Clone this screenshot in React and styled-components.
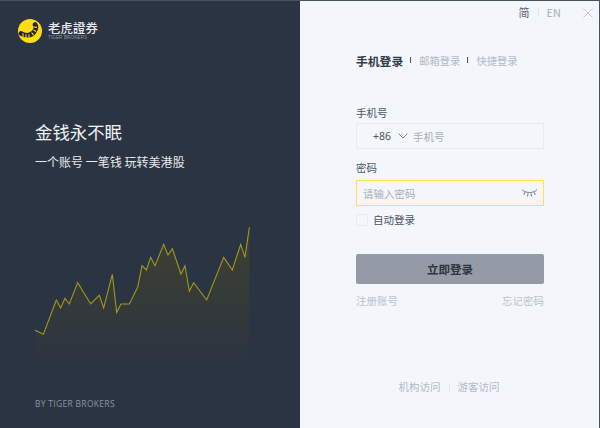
import React from "react";
import styled, { createGlobalStyle } from "styled-components";

const Global = createGlobalStyle`
  html, body { margin: 0; padding: 0; background: #2a3442; }
  * { box-sizing: border-box; }
  body { font-family: "Noto Sans CJK SC", "Liberation Sans", sans-serif; }
`;
const Win = styled.div`
  width: 600px; height: 428px; display: flex; overflow: hidden;
  border-top: 1px solid #4a525e; border-right: 1px solid #4a525e;
`;
const Left = styled.aside`
  width: 300px; height: 100%; background: #2a3442; color: #fff;
  display: flex; flex-direction: column; padding: 15px 0 0 18px;
`;
const Brand = styled.div`
  display: flex; align-items: center; gap: 6px; height: 30px;
`;
const BrandText = styled.div`
  display: flex; flex-direction: column; color: #e8eaed;
`;
const BrandName = styled.div`
  font-family: "Noto Sans CJK TC", sans-serif; font-size: 12.4px; line-height: 14px; font-weight: 500; letter-spacing: 0.1px;
`;
const BrandSub = styled.div`
  font-family: "Liberation Sans", sans-serif; font-size: 4.6px; line-height: 6px; color: #8f96a0; letter-spacing: 0.1px;
`;
const Slogan = styled.div`
  margin: 74px 0 0 17px; font-size: 17.4px; line-height: 24px; color: #f0f1f3;
`;
const Sub = styled.div`
  margin: 9px 0 0 17px; font-size: 12px; line-height: 18px; color: #e8eaed; letter-spacing: 0.02px;
`;
const Chart = styled.svg`
  display: block; width: 240px; height: 170px; margin: 39px 0 0 2px; flex: none;
`;
const By = styled.div`
  margin: 18px 0 0 17px; font-family: "Open Sans", "Liberation Sans", sans-serif; font-size: 8.5px; line-height: 12px; color: #8d95a0; letter-spacing: 0.3px;
`;
const Right = styled.main`
  flex: 1; height: 100%; background: #f3f6fb; display: flex; flex-direction: column; padding: 0 0 0 56px;
`;
const Top = styled.div`
  display: flex; align-items: center; justify-content: flex-end; height: 22px; margin-right: 6px; gap: 8px; color: #a6adb8;
`;
const Lang = styled.span`
  color: ${p => (p.$on ? "#5a6472" : "#a6adb8")}; font-size: 11px; line-height: 14px;
`;
const Sep = styled.i`
  display: block; width: 1px; height: ${p => p.$h || 7}px; background: ${p => p.$c || "#dfe3ea"};
`;
const Close = styled.svg`
  width: 10px; height: 10px; margin: 2px 0 0 14px; display: block;
`;
const Tabs = styled.div`
  display: flex; align-items: center; margin-top: 30px; height: 16px; color: #b3b9c4;
`;
const Tab = styled.span`
  font-size: ${p => (p.$on ? "11.8px" : "10.3px")}; font-weight: ${p => (p.$on ? 700 : 400)}; color: ${p => (p.$on ? "#323b48" : "#b3b9c4")}; line-height: 16px;
`;
const TabSep = styled.i`
  display: block; width: 1px; height: 6px; background: #4a5361; margin: 0 8px 3px 7px;
`;
const Label = styled.div`
  font-size: 10.5px; line-height: 14px; color: #4b5462; margin-top: ${p => p.$mt}px;
`;
const Field = styled.div`
  width: 188px; height: 26px; margin-top: ${p => p.$mt}px; display: flex; align-items: center;
  border: ${p => (p.$focus ? "1px solid #fde349" : "1px solid #e6eaf2")};
  font-size: 10.5px; color: #a6adb8;
  padding-left: ${p => p.$pl}px; padding-right: 5px;
`;
const Code = styled.span`
  color: #4b5462; font-size: 10.5px; font-family: "Noto Sans", sans-serif;
`;
const Chevron = styled.svg`
  width: 10px; height: 6px; margin: 0 5px 0 7px; display: block;
`;
const Eye = styled.svg`
  width: 17px; height: 10px; margin-left: auto; display: block;
`;
const Check = styled.label`
  display: flex; align-items: center; gap: 5px; margin-top: 7px; font-size: 10.5px; line-height: 14px; color: #4b5462;
`;
const Box = styled.span`
  display: block; width: 12px; height: 12px; border: 1px solid #e6eaf2; border-radius: 2px;
`;
const Submit = styled.button`
  display: block; width: 188px; height: 30px; margin-top: 27px; border: 0; border-radius: 2px; background: #949ba6;
  color: #2d3540; font: 700 11.5px/30px "Noto Sans CJK SC", sans-serif; padding: 0;
`;
const Links = styled.div`
  width: 188px; display: flex; justify-content: space-between; margin-top: 10px; font-size: 10.5px; line-height: 14px; color: #bcc2cc;
`;
const Foot = styled.div`
  width: 186px; display: flex; justify-content: center; align-items: center; margin-top: 72px; gap: 8px; font-size: 10.5px; line-height: 14px; color: #b3b9c4;
`;

const pts = "45,361 70,373 109,270 122,294 135,265 148,282 173,218 212,282 238,256 251,294 277,193 290,307 303,282 328,282 353,232 366,167 379,180 392,142 405,167 431,103 444,135 457,116 483,192 495,167 508,243 521,218 560,270 611,142 637,180 662,103 675,142 688,52";

export default function App() {
  return (
    <>
      <Global />
      <Win>
        <Left>
          <Brand>
            <svg width="24" height="24" viewBox="0 0 24 24">
              <circle cx="12" cy="12" r="12" fill="#fcdc12" />
              <path d="M3 14.5 C7 17 13 17 16 13 C18 10.5 18.5 7.5 17 5.5" fill="none" stroke="#23262a" strokeWidth="4.6" strokeLinecap="round" />
              <path d="M5 14.2v4M8 15.2v4M11 15.2v3.6M13.6 13.6l2 2.6M15.5 11l2.6 1.4M16 8l3 .4" stroke="#fcdc12" strokeWidth="1.1" />
            </svg>
            <BrandText>
              <BrandName>老虎證券</BrandName>
              <BrandSub>TIGER BROKERS</BrandSub>
            </BrandText>
          </Brand>
          <Slogan>金钱永不眠</Slogan>
          <Sub>一个账号 一笔钱 玩转美港股</Sub>
          <Chart viewBox="0 0 720 510">
            <defs>
              <linearGradient id="area" x1="0" y1="0" x2="0" y2="1">
                <stop offset="0" stopColor="#41422f" stopOpacity="0.9" />
                <stop offset="1" stopColor="#2b3441" stopOpacity="0.9" />
              </linearGradient>
            </defs>
            <polygon points={`${pts} 688,475 45,475`} fill="url(#area)" />
            <polyline points={pts} fill="none" stroke="#a49a1c" strokeWidth="3.2" />
          </Chart>
          <By>BY TIGER BROKERS</By>
        </Left>
        <Right>
          <Top>
            <Lang $on>简</Lang>
            <Sep />
            <Lang>EN</Lang>
            <Close viewBox="0 0 10 10"><path d="M.5.5l9 9M9.5.5l-9 9" stroke="#b8bec8" strokeWidth="0.8" /></Close>
          </Top>
          <Tabs>
            <Tab $on>手机登录</Tab>
            <TabSep />
            <Tab>邮箱登录</Tab>
            <TabSep />
            <Tab>快捷登录</Tab>
          </Tabs>
          <Label $mt={37}>手机号</Label>
          <Field $mt={3} $pl={16}>
            <Code>+86</Code>
            <Chevron viewBox="0 0 10 6"><path d="M.7.7L5 5l4.3-4.3" fill="none" stroke="#6a7280" strokeWidth="0.9" /></Chevron>
            手机号
          </Field>
          <Label $mt={12}>密码</Label>
          <Field $mt={5} $pl={6} $focus>
            请输入密码
            <Eye viewBox="0 0 17 10">
              <path d="M1 1.5C4 5.5 13 5.5 16 1.5" fill="none" stroke="#6a7280" strokeWidth="0.9" />
              <path d="M4 4.3L2.8 7M7 5.3L6.5 8.5M10 5.3l.5 3.2M13 4.3l1.2 2.7" stroke="#6a7280" strokeWidth="0.9" />
            </Eye>
          </Field>
          <Check><Box />自动登录</Check>
          <Submit>立即登录</Submit>
          <Links><span>注册账号</span><span>忘记密码</span></Links>
          <Foot><span>机构访问</span><Sep $h={8} /><span>游客访问</span></Foot>
        </Right>
      </Win>
    </>
  );
}
